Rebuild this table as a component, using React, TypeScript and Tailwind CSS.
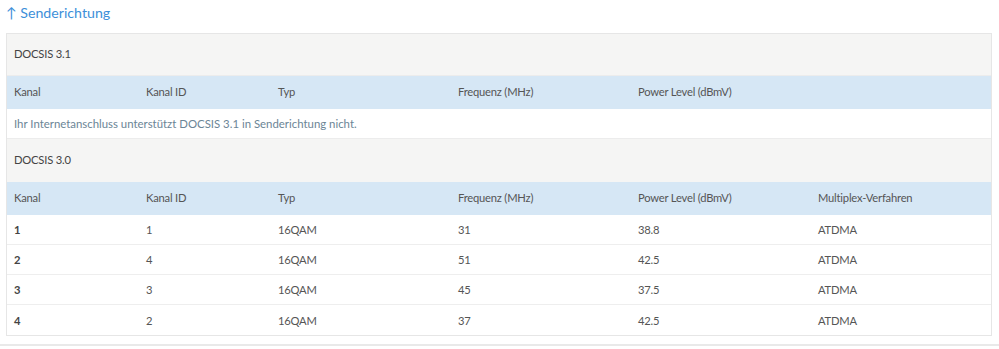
import React from "react";

const cols = "grid grid-cols-[132px_132px_180px_180px_180px_1fr]";

const rows = [
  ["1", "1", "16QAM", "31", "38.8", "ATDMA"],
  ["2", "4", "16QAM", "51", "42.5", "ATDMA"],
  ["3", "3", "16QAM", "45", "37.5", "ATDMA"],
  ["4", "2", "16QAM", "37", "42.5", "ATDMA"],
];

function Header({ six }: { six: boolean }) {
  const h = ["Kanal", "Kanal ID", "Typ", "Frequenz (MHz)", "Power Level (dBmV)", six ? "Multiplex-Verfahren" : ""];
  return (
    <div className={`${cols} h-[33px] items-center bg-[#d6e7f5] text-[#555]`}>
      {h.map((t, i) => (
        <div key={i} className="pl-[7px]">{t}</div>
      ))}
    </div>
  );
}

export default function App() {
  return (
    <div className="bg-white w-[999px] h-[349px] overflow-hidden" style={{ fontFamily: "Lato, 'Noto Sans', sans-serif" }}>
      <div className="px-[6px] pt-[2px]">
        <div className="text-[#3d8fd9] text-[14.2px] leading-[22px] h-[31px]">↑ Senderichtung</div>
        <div className="w-[986px] border border-[#e6e6e6] text-[11.2px] tracking-[-0.2px]">
          <div className="h-[42px] bg-[#f5f5f4] flex items-center pl-[7px] text-[#444] border-b border-[#ececec]">DOCSIS 3.1</div>
          <Header six={false} />
          <div className="h-[30px] flex items-center pl-[7px] text-[#6b8596] text-[11.4px] tracking-normal border-b border-[#ececec]">
            Ihr Internetanschluss unterstützt DOCSIS 3.1 in Senderichtung nicht.
          </div>
          <div className="h-[43px] bg-[#f5f5f4] flex items-center pl-[7px] text-[#444]">DOCSIS 3.0</div>
          <Header six={true} />
          {rows.map((r, i) => (
            <div key={i} className={`${cols} h-[30px] pt-[2px] items-center text-[#555] ${i < 3 ? "border-b border-[#eeeeee]" : ""}`}>
              {r.map((c, j) => (
                <div key={j} className={`pl-[7px] ${j === 0 ? "font-bold text-[#444]" : ""}`}>{c}</div>
              ))}
            </div>
          ))}
        </div>
      </div>
      <div className="mt-[8px] border-t-2 border-[#e9e9e9]" />
    </div>
  );
}
